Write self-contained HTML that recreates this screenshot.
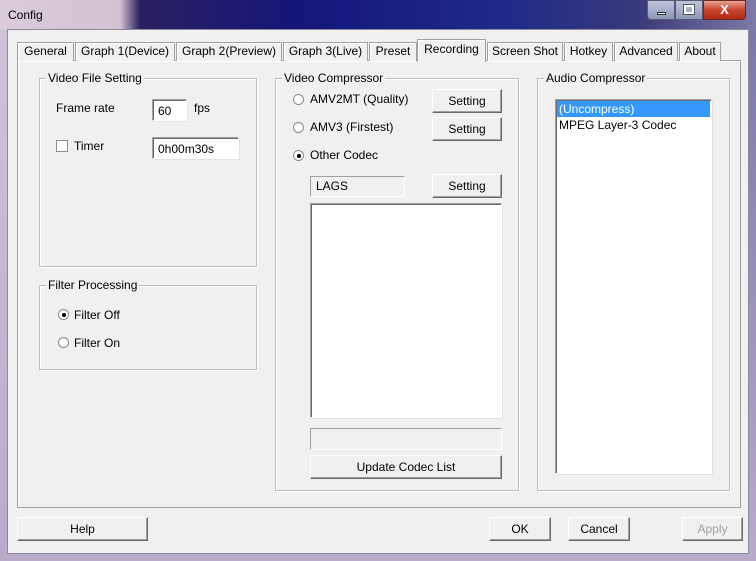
<!DOCTYPE html>
<html><head><style>
*{margin:0;padding:0;box-sizing:border-box}
body{width:756px;height:561px;overflow:hidden;font-family:"Liberation Sans",sans-serif;font-size:12px;color:#000;position:relative;background:#bfb3cf}
.a{position:absolute}
.title{left:0;top:0;width:756px;height:30px;background:linear-gradient(90deg,#d9cbd9 0,#d2c2d2 120px,#2a2060 140px,#15157a 300px,#1e2a8a 500px,#3a3a7a 640px,#7e7aa8 756px)}
.frameL{left:0;top:30px;width:8px;height:531px;background:linear-gradient(#d0c3d6,#b9aacb)}
.frameR{right:0;top:30px;width:8px;height:531px;background:linear-gradient(#7b78a8,#b9aacb)}
.frameB{left:0;top:553px;width:756px;height:8px;background:#b8aac9}
.client{left:7px;top:29px;width:742px;height:525px;background:#f0f0f0;border:1px solid #8a8a9a}
.grp{border:1px solid #bcbcbc;box-shadow:inset 1px 1px 0 #fff,1px 1px 0 #fff}
.lg{position:absolute;top:-8px;left:6px;background:#f0f0f0;padding:0 2px;white-space:nowrap}
.btn{position:absolute;background:linear-gradient(#f2f2f2,#ebebeb 50%,#dddddd 51%,#cfcfcf);border:1px solid #707070;border-radius:2px;text-align:center;line-height:20px}
.btn2{position:absolute;background:#f0f0f0;border:1px solid #fff;border-right-color:#696969;border-bottom-color:#696969;box-shadow:inset -1px -1px 0 #a0a0a0;text-align:center}
.edit{position:absolute;background:#fff;border:1px solid #a0a0a0;border-right-color:#fff;border-bottom-color:#fff;box-shadow:inset 1px 1px 0 #696969,1px 1px 0 #e3e3e3}
.tab{position:absolute;top:42px;height:19px;border:1px solid #a0a0a0;border-bottom:none;background:#f0f0f0;box-shadow:inset 1px 1px 0 #fff;text-align:center;line-height:17px;white-space:nowrap}
.rad{position:absolute;width:11px;height:11px;border-radius:50%;border:1px solid #8a8a8a;background:#fff}
.dot{position:absolute;left:3px;top:3px;width:4px;height:4px;border-radius:50%;background:#000}
</style></head><body>
<div class="a title"></div>
<div class="a frameL"></div><div class="a frameR"></div><div class="a frameB"></div>
<div class="a" style="left:8px;top:8px;font-size:12px">Config</div>
<div class="a" style="left:647px;top:0;width:28px;height:20px;border:1px solid #555a70;border-radius:0 0 0 4px;background:linear-gradient(#bfc6dc,#8c96b8);"><div class="a" style="left:9px;top:11px;width:9px;height:3px;background:#fff;border:1px solid #333"></div></div>
<div class="a" style="left:675px;top:0;width:28px;height:20px;border:1px solid #555a70;background:linear-gradient(#bfc6dc,#8c96b8);"><div class="a" style="left:8px;top:4px;width:10px;height:9px;border:2px solid #fff;outline:1px solid #555"></div></div>
<div class="a" style="left:703px;top:0;width:43px;height:20px;border:1px solid #6a2a20;border-radius:0 0 4px 0;background:linear-gradient(#e8a494,#c8432c 50%,#b02c18);color:#fff;font-weight:bold;font-size:13px;text-align:center;line-height:18px">X</div>
<div class="a client"></div>
<!-- panel -->
<div class="a" style="left:17px;top:60px;width:724px;height:448px;border:1px solid #a0a0a0;background:#f0f0f0;box-shadow:inset 1px 1px 0 #fff"></div>
<div class="tab" style="left:17px;width:57px">General</div>
<div class="tab" style="left:75px;width:100px">Graph 1(Device)</div>
<div class="tab" style="left:176px;width:106px">Graph 2(Preview)</div>
<div class="tab" style="left:283px;width:85px">Graph 3(Live)</div>
<div class="tab" style="left:369px;width:48px">Preset</div>
<div class="tab" style="left:417px;top:39px;height:23px;width:69px;z-index:2;line-height:19px;background:#f0f0f0">Recording</div>
<div class="tab" style="left:487px;width:76px">Screen Shot</div>
<div class="tab" style="left:564px;width:49px">Hotkey</div>
<div class="tab" style="left:614px;width:64px">Advanced</div>
<div class="tab" style="left:679px;width:42px">About</div>

<!-- Video File Setting -->
<div class="a grp" style="left:39px;top:78px;width:218px;height:189px"><span class="lg">Video File Setting</span></div>
<div class="a" style="left:56px;top:101px">Frame rate</div>
<div class="edit" style="left:152px;top:99px;width:35px;height:22px;padding:4px 0 0 5px">60</div>
<div class="a" style="left:194px;top:101px">fps</div>
<div class="a" style="left:56px;top:140px;width:12px;height:12px;border:1px solid #8a8a8a;background:#fff"></div>
<div class="a" style="left:74px;top:139px">Timer</div>
<div class="edit" style="left:152px;top:137px;width:87px;height:22px;padding:4px 0 0 5px">0h00m30s</div>

<!-- Filter Processing -->
<div class="a grp" style="left:39px;top:285px;width:218px;height:85px"><span class="lg">Filter Processing</span></div>
<div class="rad" style="left:58px;top:309px"><div class="dot"></div></div>
<div class="a" style="left:74px;top:308px">Filter Off</div>
<div class="rad" style="left:58px;top:337px"></div>
<div class="a" style="left:74px;top:336px">Filter On</div>

<!-- Video Compressor -->
<div class="a grp" style="left:275px;top:78px;width:244px;height:413px"><span class="lg">Video Compressor</span></div>
<div class="rad" style="left:293px;top:94px"></div>
<div class="a" style="left:310px;top:92px">AMV2MT (Quality)</div>
<div class="btn2" style="left:432px;top:89px;width:70px;height:24px;line-height:22px">Setting</div>
<div class="rad" style="left:293px;top:122px"></div>
<div class="a" style="left:310px;top:120px">AMV3 (Firstest)</div>
<div class="btn2" style="left:432px;top:117px;width:70px;height:24px;line-height:22px">Setting</div>
<div class="rad" style="left:293px;top:150px"><div class="dot"></div></div>
<div class="a" style="left:310px;top:148px">Other Codec</div>
<div class="a" style="left:310px;top:176px;width:95px;height:21px;border:1px solid #a0a0a0;border-right-color:#fff;border-bottom-color:#fff;padding:2px 0 0 5px">LAGS</div>
<div class="btn2" style="left:432px;top:174px;width:70px;height:24px;line-height:22px">Setting</div>
<div class="edit" style="left:310px;top:203px;width:192px;height:215px"></div>
<div class="a" style="left:310px;top:428px;width:192px;height:22px;border:1px solid #a0a0a0;border-right-color:#fff;border-bottom-color:#fff"></div>
<div class="btn2" style="left:310px;top:455px;width:192px;height:24px;line-height:22px">Update Codec List</div>

<!-- Audio Compressor -->
<div class="a grp" style="left:537px;top:78px;width:193px;height:413px"><span class="lg">Audio Compressor</span></div>
<div class="edit" style="left:555px;top:99px;width:157px;height:375px"></div>
<div class="a" style="left:557px;top:101px;width:153px;height:16px;background:#3399ff;color:#fff;padding:1px 0 0 2px">(Uncompress)</div>
<div class="a" style="left:559px;top:118px">MPEG Layer-3 Codec</div>

<!-- bottom buttons -->
<div class="btn2" style="left:17px;top:517px;width:131px;height:24px;line-height:22px">Help</div>
<div class="btn2" style="left:489px;top:517px;width:62px;height:24px;line-height:22px">OK</div>
<div class="btn2" style="left:568px;top:517px;width:62px;height:24px;line-height:22px">Cancel</div>
<div class="btn2" style="left:682px;top:517px;width:61px;height:24px;line-height:22px;color:#a0a0a0">Apply</div>
</body></html>
